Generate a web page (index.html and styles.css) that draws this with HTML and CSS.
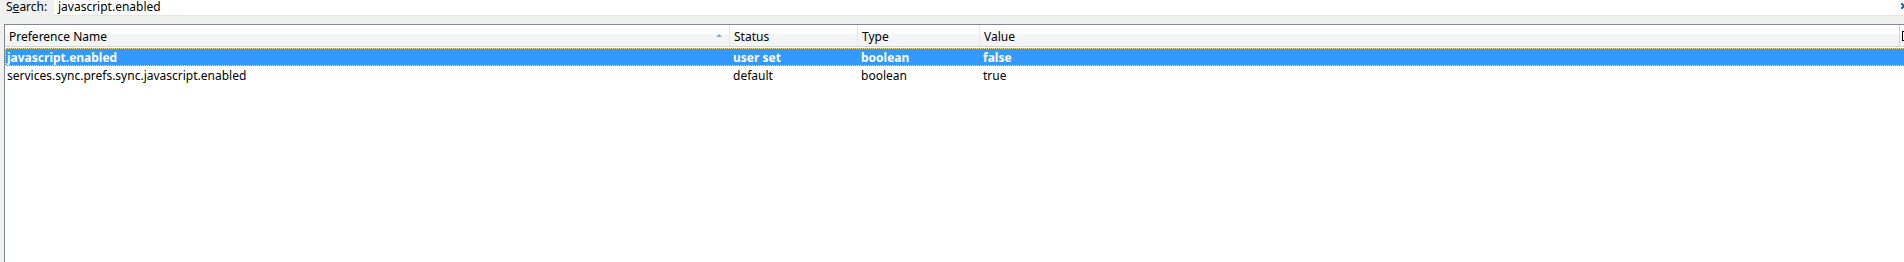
FILE: index.html
```html
<!DOCTYPE html>
<html>
<head>
<meta charset="utf-8">
<link rel="stylesheet" href="styles.css">
</head>
<body>
<div class="searchbar">
  <label class="search-label">S<u>e</u>arch:</label>
  <div class="search-input">javascript.enabled</div>
  <span class="clear-btn"></span>
</div>
<div class="tree">
  <div class="row header">
    <div class="cell c-name hcell">Preference Name<span class="sort-arrow"></span></div>
    <div class="cell c-status hcell">Status</div>
    <div class="cell c-type hcell">Type</div>
    <div class="cell c-value hcell">Value</div>
    <div class="cell c-pick hcell"><span class="picker"></span></div>
  </div>
  <div class="row item selected">
    <div class="cell c-name">javascript.enabled</div>
    <div class="cell c-status">user set</div>
    <div class="cell c-type">boolean</div>
    <div class="cell c-value">false</div>
  </div>
  <div class="row item">
    <div class="cell c-name">services.sync.prefs.sync.javascript.enabled</div>
    <div class="cell c-status">default</div>
    <div class="cell c-type">boolean</div>
    <div class="cell c-value">true</div>
  </div>
</div>
</body>
</html>
```
FILE: styles.css
```css
html, body {
  margin: 0;
  padding: 0;
}
body {
  width: 1904px;
  height: 262px;
  overflow: hidden;
  background: #f0f0f0;
  font-family: "Noto Sans", "Open Sans", sans-serif;
  font-size: 12px;
  color: #000;
}
.searchbar {
  display: flex;
  align-items: flex-start;
  height: 24px;
  position: relative;
}
.search-label {
  margin-left: 6px;
  width: 48px;
  line-height: 12px;
  padding-top: 1px;
}
.search-label u {
  text-decoration: underline;
}
.search-input {
  flex: 1;
  height: 14px;
  padding-top: 1px;
  background: #fff;
  border-bottom: 1px solid #dfe6ee;
  line-height: 12px;
  padding-left: 4px;
}
.clear-btn {
  position: absolute;
  right: -3px;
  top: 3px;
  width: 6px;
  height: 6px;
  background:
    linear-gradient(45deg, transparent 40%, #2d6fa8 40%, #2d6fa8 60%, transparent 60%),
    linear-gradient(-45deg, transparent 40%, #2d6fa8 40%, #2d6fa8 60%, transparent 60%);
}
.tree {
  margin-left: 4px;
  width: 1930px;
  height: 240px;
  background: #fff;
  border-top: 1px solid #828790;
  border-left: 1px solid #828790;
}
.row {
  display: grid;
  grid-template-columns: 724px 128px 122px 920px 30px;
}
.header {
  height: 21px;
  background: linear-gradient(to bottom, #ffffff 0%, #ffffff 45%, #f4f5f7 45%, #f2f3f5 100%);
  border-bottom: 1px solid #d5d5d5;
  margin-bottom: 1px;
}
.hcell {
  position: relative;
  line-height: 18px;
  padding-top: 3px;
  padding-left: 4px;
  border-left: 1px solid #e3e5e8;
}
.c-name.hcell {
  border-left: none;
}
.sort-arrow {
  position: absolute;
  right: 7px;
  top: 9px;
  width: 0;
  height: 0;
  border-left: 3px solid transparent;
  border-right: 3px solid transparent;
  border-bottom: 3px solid #8aa6c1;
}
.c-pick.hcell {
  border-left: 1px solid #d5d5d5;
  padding-left: 2px;
  padding-top: 0;
}
.picker {
  display: inline-block;
  width: 5px;
  height: 8px;
  margin-top: 6px;
  border: 1px solid #000;
  vertical-align: top;
}
.item {
  height: 18px;
  box-sizing: border-box;
  padding-top: 1px;
  line-height: 17px;
}
.item .cell {
  padding-left: 4px;
  white-space: nowrap;
}
.item .c-name {
  padding-left: 2px;
}
.selected {
  background: #3399ff;
  color: #fff;
  font-weight: bold;
  outline: 1px dotted #f5e08a;
  outline-offset: -1px;
}
```
